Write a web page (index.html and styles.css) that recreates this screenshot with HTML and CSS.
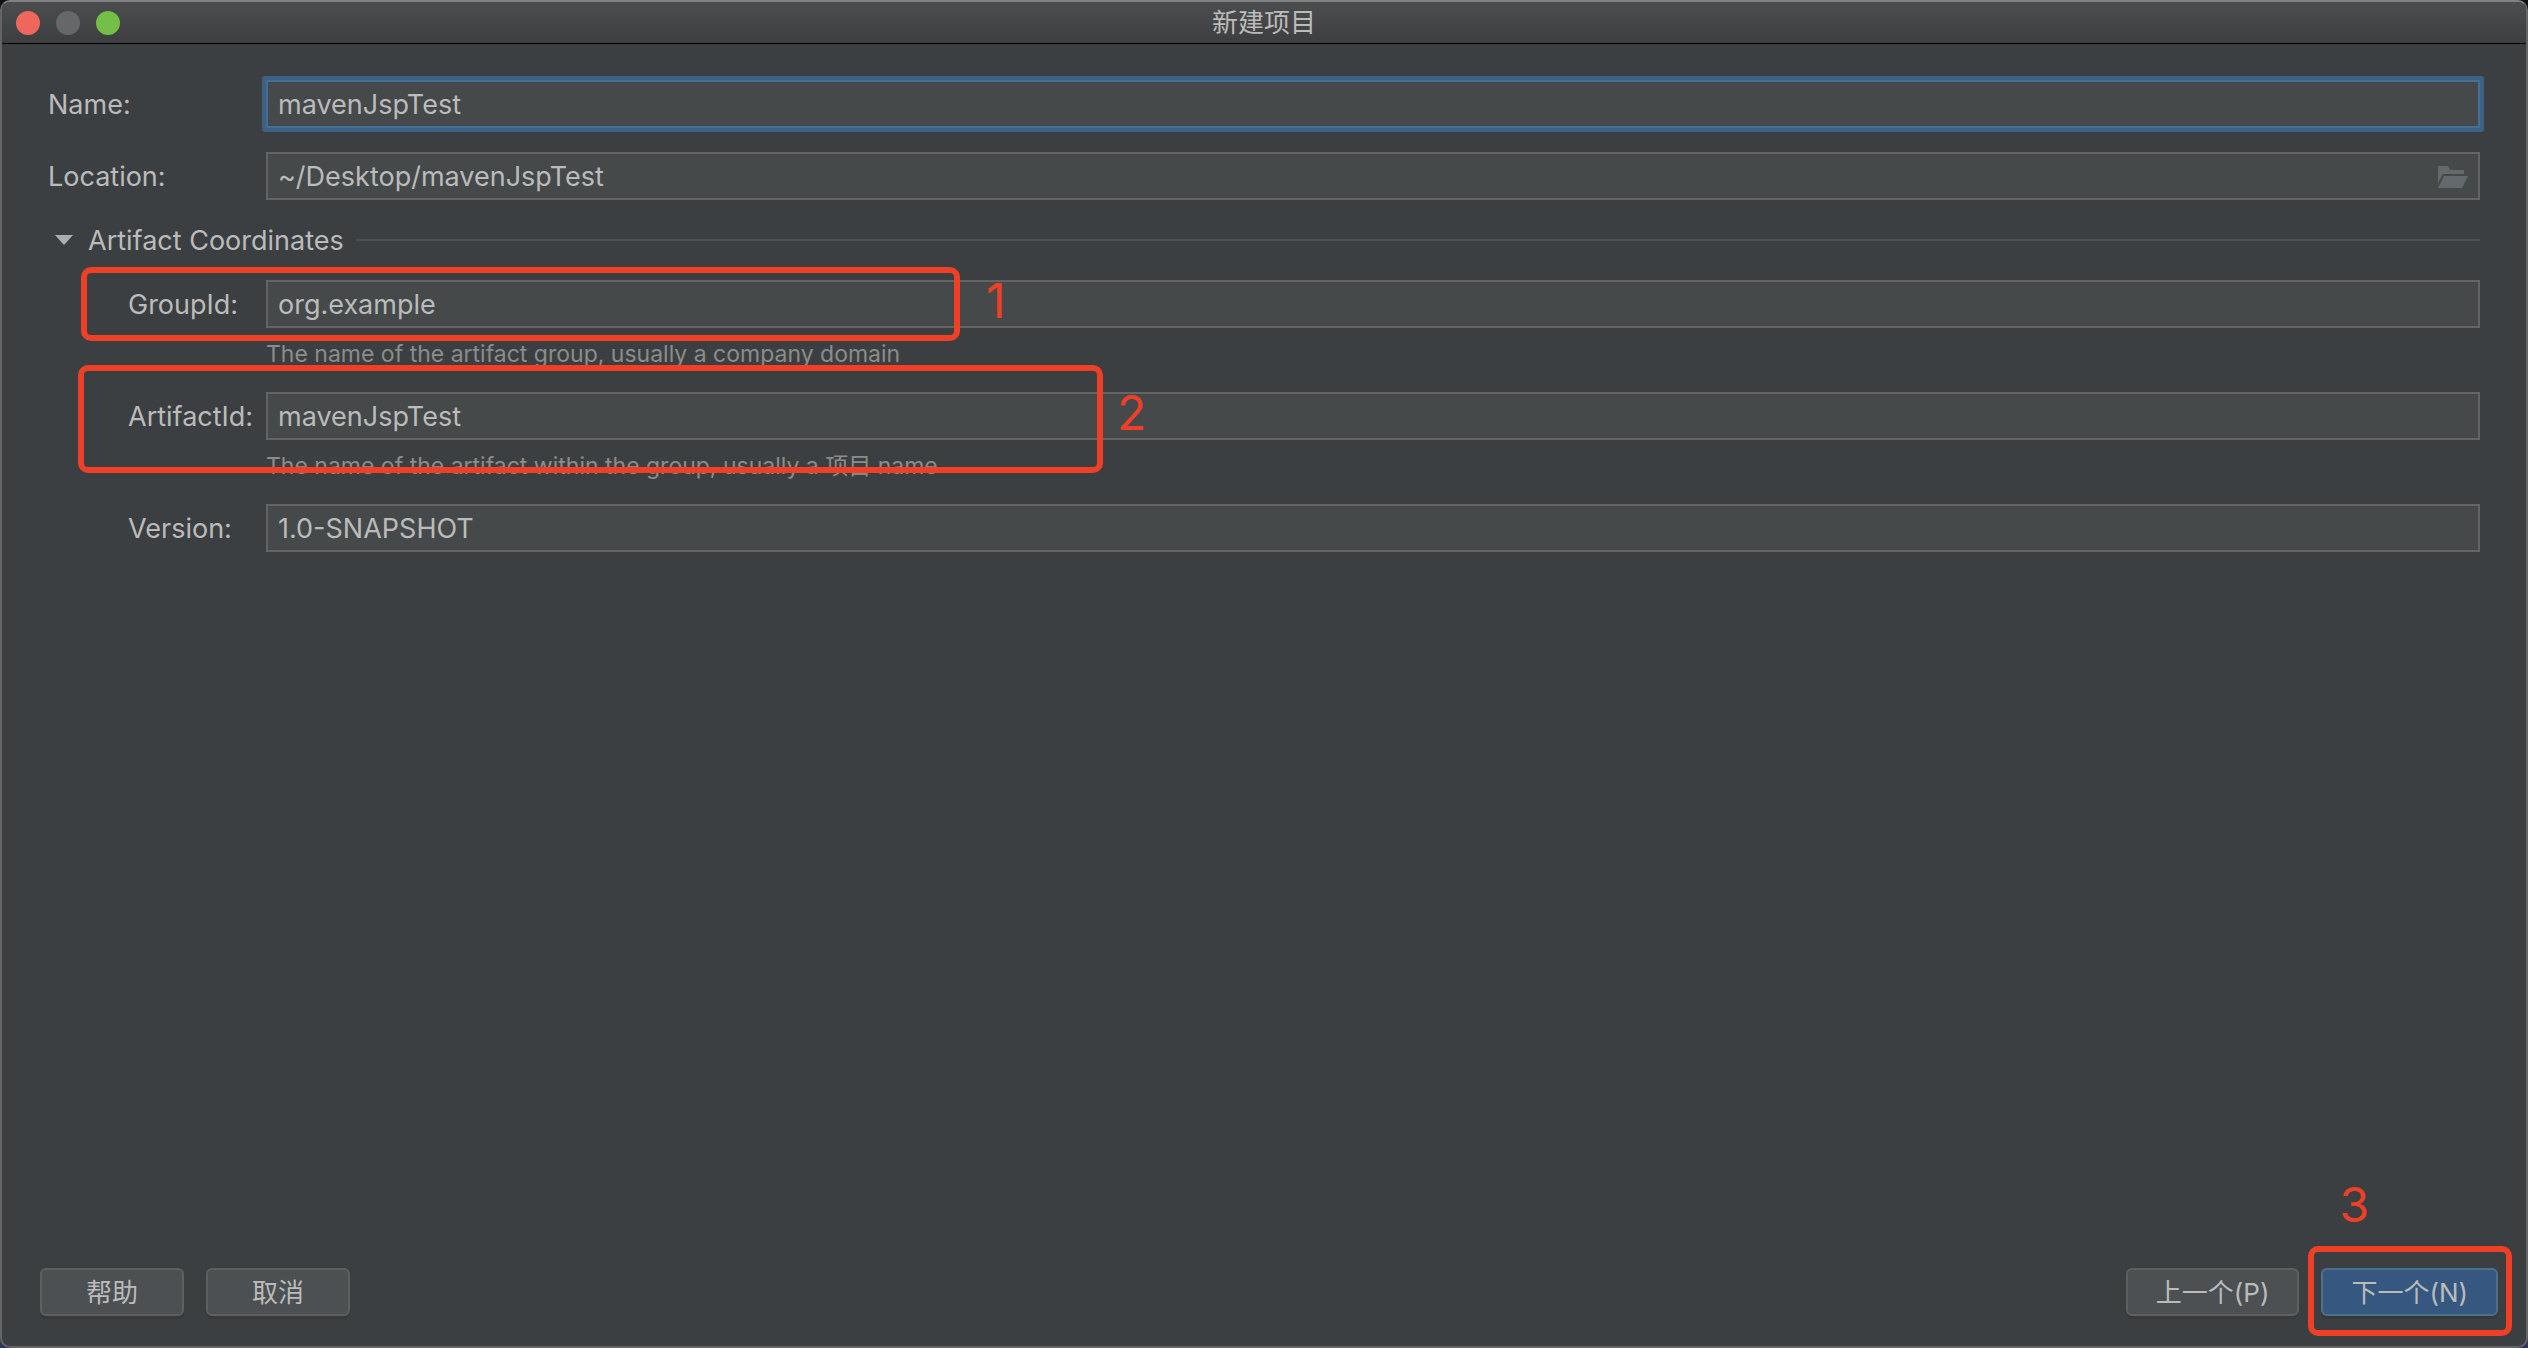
FILE: index.html
```html
<!DOCTYPE html>
<html lang="zh-CN">
<head>
    <meta charset="UTF-8">
    <meta name="viewport" content="width=device-width, initial-scale=1.0">
    <title>新建项目</title>
    <link rel="stylesheet" href="styles.css">
</head>
<body>
    <div class="window">
        <header class="titlebar">
            <div class="lights">
                <button class="light red" type="button" aria-label="关闭"></button>
                <button class="light gray" type="button" aria-label="最小化" disabled></button>
                <button class="light green" type="button" aria-label="缩放"></button>
            </div>
            <h1>新建项目</h1>
        </header>
        <form class="form">
            <div class="row">
                <label for="name">Name:</label>
                <input class="field focused" id="name" type="text" value="mavenJspTest" spellcheck="false">
            </div>
            <div class="row">
                <label for="location">Location:</label>
                <div class="field-box">
                    <input class="field" id="location" type="text" value="~/Desktop/mavenJspTest" spellcheck="false">
                    <button class="browse" type="button" aria-label="Browse">
                        <svg width="30" height="22" viewBox="0 0 30 22">
                            <path d="M0 0H10L12 4H26V8H5L0 17Z"/>
                            <path d="M6 10H30L24 22H0Z"/>
                        </svg>
                    </button>
                </div>
            </div>
            <details class="coordinates" open>
                <summary>
                    <svg class="arrow" width="18" height="10" viewBox="0 0 18 10">
                        <path d="M0 0H18L9 10Z"/>
                    </svg>
                    <span class="heading">Artifact Coordinates</span>
                    <span class="line"></span>
                </summary>
                <div class="row sub">
                    <label for="group">GroupId:</label>
                    <input class="field" id="group" type="text" value="org.example" spellcheck="false">
                    <div class="mark mark-group"><span class="number">1</span></div>
                </div>
                <p class="hint">The name of the artifact group, usually a company domain</p>
                <div class="row sub">
                    <label for="artifact">ArtifactId:</label>
                    <input class="field" id="artifact" type="text" value="mavenJspTest" spellcheck="false">
                    <div class="mark mark-artifact"><span class="number">2</span></div>
                </div>
                <p class="hint">The name of the artifact within the group, usually a 项目 name</p>
                <div class="row sub">
                    <label for="version">Version:</label>
                    <input class="field" id="version" type="text" value="1.0-SNAPSHOT" spellcheck="false">
                </div>
            </details>
        </form>
        <footer class="actions">
            <button class="btn" type="button">帮助</button>
            <button class="btn" type="button">取消</button>
            <span class="spacer"></span>
            <button class="btn" type="button">上一个(P)</button>
            <div class="next">
                <button class="btn primary" type="button">下一个(N)</button>
                <div class="mark mark-next"><span class="number">3</span></div>
            </div>
        </footer>
    </div>
</body>
</html>
```

FILE: styles.css
```css
:root{
    --bg: #3c3f41;
    --field: #45494a;
    --border: #646464;
    --text: #bbbbbb;
    --hint: #8c8c8c;
    --mark: #ee4026;
}
*,*::before,*::after{
    box-sizing: border-box;
    margin: 0;
    padding: 0;
}
body{
    background: linear-gradient(#10101c, #30365a);
    color: var(--text);
    font-family: Inter, "Noto Sans CJK SC", sans-serif;
    font-size: 27px;
    line-height: 32px;
}
button,input{
    font: inherit;
    color: inherit;
}
.window{
    display: flex;
    flex-direction: column;
    min-height: 100vh;
    background-color: var(--bg);
    border: 2px solid var(--border);
    border-top-color: #808182;
    border-radius: 10px;
    overflow: hidden;
}
.titlebar{
    display: grid;
    grid-template-columns: 1fr auto 1fr;
    align-items: center;
    height: 42px;
    padding: 0 14px;
    background: linear-gradient(#4c4d4e, #3d3e3f);
    border-bottom: 1px solid #000;
}
.titlebar h1{
    font-size: 26px;
    font-weight: 400;
}
.lights{
    display: flex;
    gap: 16px;
}
.light{
    width: 24px;
    height: 24px;
    border: none;
    border-radius: 50%;
}
.red{
    background-color: #ee675c;
}
.gray{
    background-color: #666769;
}
.green{
    background-color: #73bf48;
}
.form{
    flex: 1;
    padding: 36px 46px;
}
.row{
    display: flex;
    align-items: center;
    position: relative;
    margin-bottom: 24px;
}
.row label{
    flex: none;
    width: 218px;
    padding-top: 2px;
}
.row.sub{
    margin-bottom: 0;
}
.sub label{
    padding-left: 80px;
}
.field{
    flex: 1;
    width: 100%;
    min-width: 0;
    height: 48px;
    padding: 0 10px;
    background-color: var(--field);
    border: 2px solid var(--border);
    outline: none;
}
.focused{
    border-color: #466d94;
    box-shadow: 0 0 0 4px #3d6185;
    border-radius: 1px;
}
.field-box{
    display: flex;
    flex: 1;
    position: relative;
}
.browse{
    position: absolute;
    right: 12px;
    top: 14px;
    display: flex;
    background: none;
    border: none;
    fill: #626a6e;
}
.coordinates summary{
    display: flex;
    align-items: center;
    height: 32px;
    margin-bottom: 24px;
    padding-left: 7px;
    list-style: none;
}
.heading{
    padding-top: 2px;
}
.arrow{
    margin-right: 15px;
    fill: #adadad;
}
.line{
    flex: 1;
    height: 2px;
    margin-left: 12px;
    background-color: #515151;
}
.hint{
    height: 64px;
    padding: 10px 0 0 218px;
    color: var(--hint);
    font-size: 23px;
}
/* red annotations drawn over the dialog */
.mark{
    position: absolute;
    border: 6px solid var(--mark);
    border-radius: 10px;
    pointer-events: none;
}
.number{
    position: absolute;
    color: var(--mark);
    font-size: 48px;
    line-height: 48px;
}
.mark-group{
    left: 33px;
    top: -13px;
    width: 879px;
    height: 74px;
}
.mark-group .number{
    left: 899px;
    top: 4px;
}
.mark-artifact{
    left: 30px;
    top: -27px;
    width: 1025px;
    height: 108px;
}
.mark-artifact .number{
    left: 1033px;
    top: 18px;
}
.mark-next{
    inset: -22px -14px -20px -13px;
}
.mark-next .number{
    left: 25px;
    top: -71px;
}
.actions{
    display: flex;
    gap: 22px;
    padding: 0 28px 30px 38px;
}
.spacer{
    flex: 1;
}
.btn{
    min-width: 144px;
    height: 48px;
    padding: 2px 28px 0;
    background-color: #4c5052;
    border: 2px solid #5e6060;
    border-radius: 6px;
    box-shadow: 0 3px 0 #37393a;
    font-size: 26px;
}
.primary{
    background-color: #365880;
    border-color: #4c708c;
}
.next{
    position: relative;
}
```
